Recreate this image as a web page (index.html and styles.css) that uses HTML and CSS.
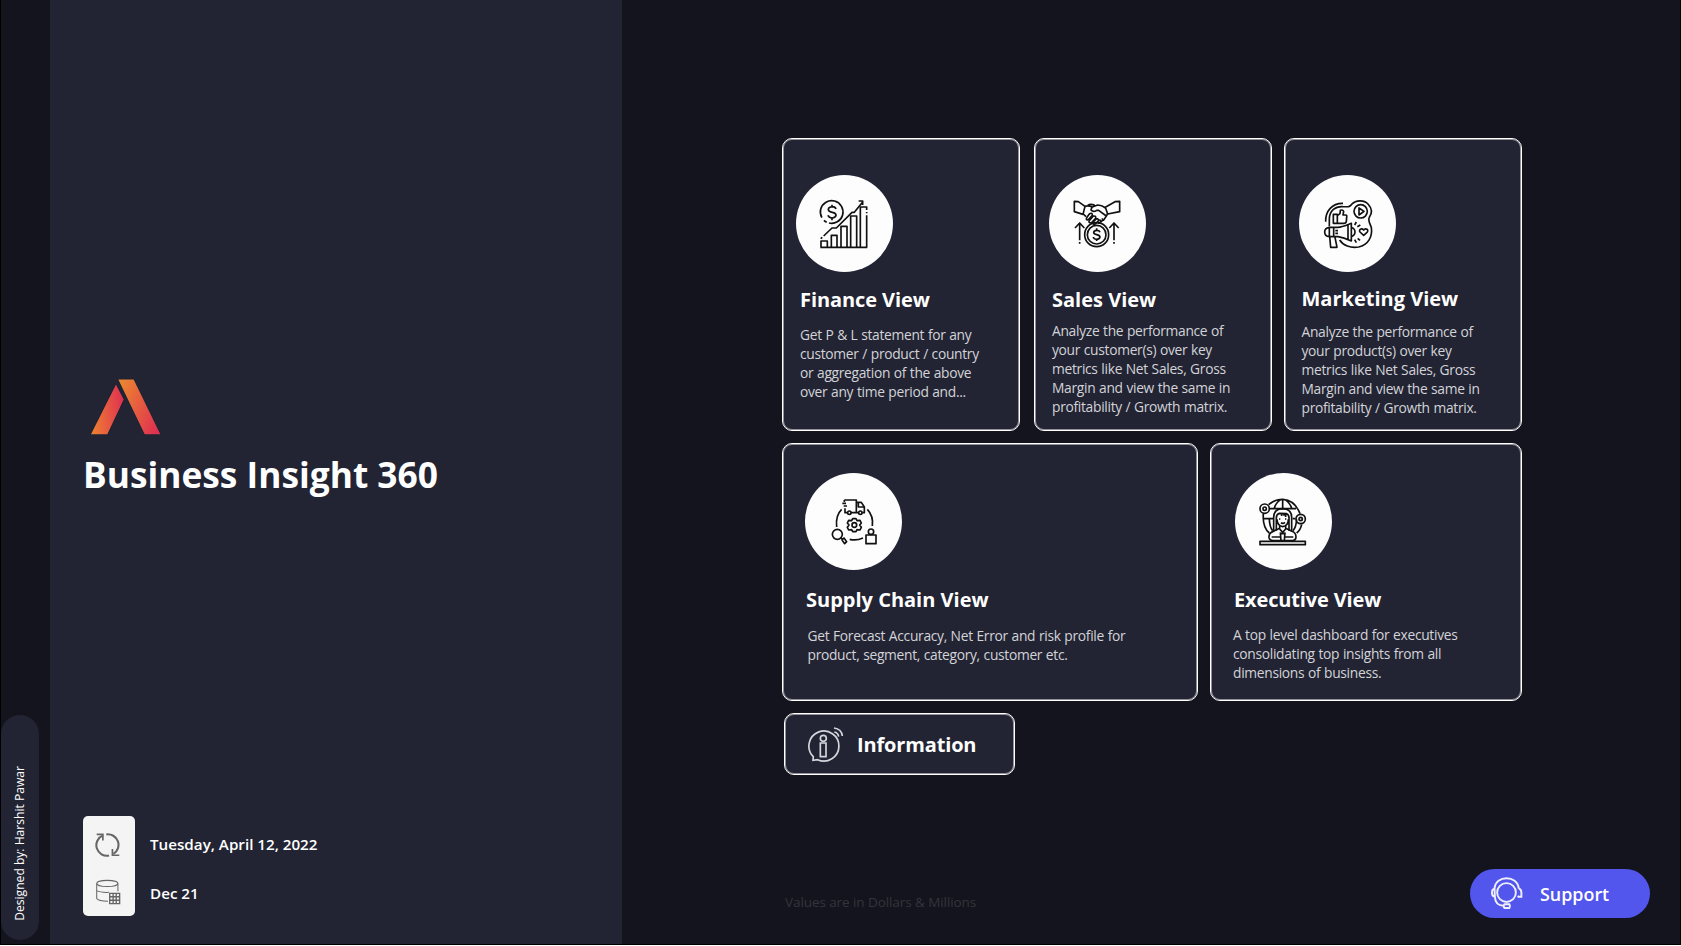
FILE: index.html
```html
<!DOCTYPE html>
<html lang="en">
<head>
<meta charset="utf-8">
<title>Business Insight 360</title>
<link rel="stylesheet" href="styles.css">
</head>
<body>
<div class="app">
  <aside class="rail"><div class="credit"><span>Designed by: Harshit Pawar</span></div></aside>
  <section class="brand">
    <svg class="logo" viewBox="90 54 216 176">
      <defs>
        <linearGradient id="ga" x1="0" x2="1" y1=".6" y2=".4"><stop offset="0" stop-color="#ee7d33"/><stop offset="1" stop-color="#df3150"/></linearGradient>
        <linearGradient id="gb" x1="0" x2="1" y1=".2" y2=".8"><stop offset="0" stop-color="#ec8331"/><stop offset="1" stop-color="#df3150"/></linearGradient>
      </defs>
      <g stroke="#142433" stroke-width="5" paint-order="stroke">
        <path fill="url(#ga)" d="M168 73 191 118 142 222H93Z"/>
        <path fill="url(#gb)" d="M175 58H221L301 222H254Z"/>
      </g>
    </svg>
    <h1>Business Insight 360</h1>
    <div class="status">
      <div class="status-icons">
        <svg viewBox="285 397 76 76" fill="none" stroke="#666" stroke-width="6"><path d="M308 407A31 31 0 0 0 326 466M318 404A31 31 0 0 1 339 461"/><path d="M290 404H308V422M356 465H336V447" stroke-width="5"/></svg>
        <svg viewBox="285 537 76 76" fill="none" stroke="#666" stroke-width="3"><ellipse cx="321" cy="550" rx="31" ry="9"/><path d="M290 550V594Q295 602 323 602M352 550V573M290 571Q300 577 326 576"/><path stroke-width="4" d="M328 579H357V609H328ZM338 579V609M347 579V609M328 589H357M328 599H357"/></svg>
      </div>
      <div class="status-text"><span class="date">Tuesday, April 12, 2022</span><span class="month">Dec 21</span></div>
    </div>
  </section>
  <main>
    <div class="row top">
      <article class="card finance">
        <div class="disc"><svg viewBox="64 135 291 291">
          <path d="M147 318 172 294H185L232 247H239L264 216M252 213H264V225"/>
          <circle cx="171" cy="246" r="34" stroke-dasharray="185 7 10 12" transform="rotate(150 171 246)"/>
          <path d="M184 237Q182 230 173 230Q161 231 161 239Q162 246 173 247Q184 249 184 256Q183 263 172 264Q162 263 160 256M172 224V230M172 264V271"/>
          <path d="M139 352V333H158V352M170 352V316H187V352M199 352V289H217V352M228 352V258H246V352M257 352V231H276V240M276 246V250M276 256V352M137 352H278M138 326 143 322"/>
        </svg></div>
        <h2>Finance View</h2>
        <p><span>Get P &amp; L statement for any</span><span>customer / product / country</span><span>or aggregation of the above</span><span>over any time period and...</span></p>
      </article>
      <article class="card sales">
        <div class="disc"><svg viewBox="72 135 291 291">
          <path d="M148 214 160 215 180 229 174 253 148 245ZM284 214 270 215 241 232 248 252 284 245Z"/>
          <path d="M180 229Q190 226 202 231L218 225Q230 225 242 234M209 226Q197 220 188 226M201 231 198 240Q205 248 215 241L221 241 244 258 248 251M244 258 237 269 219 281M230 266 238 271M223 269 231 276M175 252 183 260M187 260 193 252Q202 246 202 256L189 270Q180 270 187 260M192 273 205 258Q214 257 212 265L200 278Q191 280 192 273M203 278 214 266Q222 266 220 273L211 282Q203 284 203 278"/>
          <circle cx="215" cy="314" r="36"/><circle cx="215" cy="314" r="28"/>
          <path d="M225 307Q223 300 215 301Q206 302 206 308Q207 313 215 314Q225 316 225 322Q223 328 215 328Q206 328 205 321M215 295V301M215 328V333"/>
          <path d="M164 279V331M164 336V341M150 294 164 279 178 294M267 279V331M267 336V341M253 294 267 279 281 294"/>
        </svg></div>
        <h2>Sales View</h2>
        <p><span>Analyze the performance of</span><span>your customer(s) over key</span><span>metrics like Net Sales, Gross</span><span>Margin and view the same in</span><span>profitability / Growth matrix.</span></p>
      </article>
      <article class="card marketing">
        <div class="disc"><svg viewBox="72 135 291 291">
          <path d="M152 275C151 243 172 219 204 220M163 289V266C164 242 181 228 204 230C221 231 224 231 231 222C242 210 267 209 279 222C291 235 292 249 283 262C278 270 284 279 289 292C293 320 280 345 251 351C226 355 204 346 194 330"/>
          <circle cx="257" cy="244" r="20"/><path d="M252 234V255L267 244Z"/>
          <path d="M175 253H187V280H175ZM187 257 195 251 196 241Q203 238 206 244L204 255H213Q217 257 215 262L214 274Q213 280 207 280H187"/>
          <path d="M163 292H189C202 291 215 285 229 280V333C213 326 201 322 189 320H163Q149 319 149 306Q149 294 163 292ZM163 292V320M176 292V320M219 285V329M229 292Q240 296 240 306Q240 316 229 320M181 302H189M181 310H189M164 320 167 352H186L180 322"/>
          <path d="M239 285 244 276M247 290 256 285M239 329 244 338M248 325 255 331"/>
          <path d="M266 316 255 306C250 299 260 293 266 300C272 292 283 300 276 307Z"/>
        </svg></div>
        <h2>Marketing View</h2>
        <p><span>Analyze the performance of</span><span>your product(s) over key</span><span>metrics like Net Sales, Gross</span><span>Margin and view the same in</span><span>profitability / Growth matrix.</span></p>
      </article>
    </div>
    <div class="row bottom">
      <article class="card supply">
        <div class="disc"><svg viewBox="91 113 291 291">
          <path d="M209 194H245V232H229M219 232H211V219M203 204H214M207 212H217M209 194V200M245 201H260L269 215V232H263M250 232H245M251 202V215H268"/>
          <circle cx="224" cy="232" r="5"/><circle cx="257" cy="232" r="5"/>
          <path d="M201 222Q182 240 186 275M278 222Q297 242 293 272M225 312Q245 317 265 308"/>
          <circle cx="239" cy="269" r="7"/>
          <path d="M234 250H244L247 256 256 255 260 263 255 269 260 276 256 284 247 283 244 289H234L231 283 222 284 218 276 223 269 218 263 222 255 231 256Z"/>
          <circle cx="188" cy="297" r="15"/><path d="M198 307 204 312M202 314 208 308 216 319 210 325Z"/>
          <circle cx="289" cy="289" r="8"/><path d="M274 299H304V325H274Z"/>
        </svg></div>
        <h2>Supply Chain View</h2>
        <p><span>Get Forecast Accuracy, Net Error and risk profile for</span><span>product, segment, category, customer etc.</span></p>
      </article>
      <article class="card executive">
        <div class="disc"><svg viewBox="91 113 291 291">
          <path d="M192 208Q210 192 235 192Q270 194 286 235M176 235Q173 275 194 293M291 267Q288 283 276 293M194 220H274M177 250H205M264 250H272M234 192V219M228 193Q212 204 209 219M241 193Q257 204 261 219M194 252Q195 277 204 286M276 252Q274 277 265 286"/>
          <circle cx="180" cy="220" r="14"/><circle cx="180" cy="220" r="5"/><circle cx="288" cy="251" r="14"/><circle cx="288" cy="251" r="5"/>
          <path d="M207 289V246Q208 220 234 220Q261 221 261 246V289M215 286V250Q214 237 224 234L246 235Q254 239 253 250V286M217 252Q218 272 234 274Q251 272 251 252M231 235V242M238 235V241M243 236V245M223 251H227M241 251H245M229 262Q234 267 241 261"/>
          <path d="M225 272V281L234 291 243 281V272M225 279 206 288Q192 292 193 307Q195 316 205 316H264Q274 315 274 305Q274 292 262 288L243 279M201 305H228M240 305H266M227 291 229 316M241 291 239 316M227 295H241"/>
          <path d="M166 318H302V328H166Z"/>
        </svg></div>
        <h2>Executive View</h2>
        <p><span>A top level dashboard for executives</span><span>consolidating top insights from all</span><span>dimensions of business.</span></p>
      </article>
    </div>
    <div class="card info">
      <svg viewBox="97 872 111 111" fill="none" stroke="#d5d5dc" stroke-width="5"><path d="M116 964A45 45 0 1 1 129 973L115 975Z"/><circle cx="146" cy="909" r="9"/><path d="M137 923H154V964H137ZM179 890Q190 892 192 904M178 878Q201 881 203 902"/></svg>
      <span>Information</span>
    </div>
    <footer>
      <span class="note">Values are in Dollars &amp; Millions</span>
      <div class="support">
        <svg viewBox="120 80 100 102" fill="none" stroke="#eeeeff" stroke-width="6"><circle cx="170" cy="128" r="29"/><path d="M133 116C136 73 204 73 208 116M133 116Q125 117 125 128Q125 140 134 141ZM208 116Q216 118 216 128V141H207L205 138M134 141Q135 167 160 169M164 164H179Q183 170 179 176H164Q158 170 164 164Z"/></svg>
        <span>Support</span>
      </div>
    </footer>
  </main>
</div>
</body>
</html>
```
FILE: styles.css
```css
*{box-sizing:border-box}
body{margin:0;background:#fff;font-family:"Open Sans","Noto Sans",sans-serif;color:#fff}
h1,h2,p{margin:0}
.app{display:flex;width:1681px;height:945px;background:#14141e;border:solid #000;border-width:0 1px 1px}
.rail{width:49px;padding:715px 0 0 0;flex:none}
.credit{width:38px;height:225px;border-radius:19px;background:#222433;display:flex;align-items:flex-end;justify-content:center;padding-bottom:19px}
.credit span{writing-mode:vertical-rl;transform:rotate(180deg);font-size:12.1px;line-height:20px;white-space:nowrap}
.brand{width:572px;flex:none;background:#222433;padding:378px 0 0 33px;display:flex;flex-direction:column}
.logo{width:72px;height:59px;margin-left:7px}
h1{font-size:35.3px;line-height:48px;font-weight:700;margin-top:13px;white-space:nowrap}
.status{display:flex;margin-top:318px}
.status-icons{width:52px;height:100px;border-radius:5px;background:#f4f4f4;padding:16px 14px 11px 12px;display:flex;flex-direction:column;justify-content:space-between;align-items:center;gap:20px}
.status-icons svg{width:26px;height:26px}
.status-text{display:flex;flex-direction:column;gap:25px;padding:16px 0 0 15px;font-size:15.2px;font-weight:600;line-height:24px;white-space:nowrap}
main{padding:138px 0 0 160px;flex:1}
.row{display:flex}
.card{border:1px solid #fff;box-shadow:inset 0 0 0 1px rgba(255,255,255,.5);border-radius:10px;background:#222433}
.top .card{width:238px;height:293px;padding:36px 0 0 14px}
.top .sales{margin-left:14px}
.top .marketing{margin-left:12px}
.bottom{margin-top:12px}
.bottom .card{height:258px;padding:29px 0 0 22px}
.supply{width:416px}
.bottom .executive{width:312px;margin-left:12px;padding-left:24px}
.disc{width:97px;height:97px;border-radius:50%;background:#fdfdfd}
.disc svg{display:block;width:97px;height:97px;fill:none;stroke:#111;stroke-width:5;stroke-linejoin:round}
h2{font-size:20px;line-height:28px;font-weight:700;margin:14px 0 0 3px;white-space:nowrap}
p{font-size:13.8px;letter-spacing:-.3px;word-spacing:.4px;line-height:19px;color:#d3d3d8;margin:11px 0 0 3px}
p span{display:block;white-space:nowrap}
.top .finance{padding-left:13px}
.finance h2{letter-spacing:-.08px;margin-left:4px}
.finance p{margin-left:4px}
.sales p{margin-top:7px}
.marketing h2{margin:13px 0 0 2.5px}
.marketing p{margin:9px 0 0 2.5px}
.bottom h2{margin:16px 0 0 1px}
.supply p{margin:12px 0 0 2.5px}
.bottom .executive h2{margin-left:-1px;letter-spacing:-.15px}
.executive p{margin:11px 0 0 -2px}
.info{width:231px;height:62px;margin:12px 0 0 2px;display:flex;align-items:center;padding-left:22px}
.info svg{width:37px;height:37px}
.info span{font-size:20px;letter-spacing:-.15px;font-weight:700;line-height:28px;margin-left:13px;padding-top:2px}
footer{display:flex;align-items:flex-start;justify-content:space-between;padding:94px 30px 0 3px}
.note{font-size:13.5px;letter-spacing:-.08px;line-height:20px;color:#33343a;margin-top:23px}
.support{width:180px;height:49px;border-radius:25px;background:#5256ec;display:flex;align-items:center;padding-left:20px}
.support svg{width:33px;height:33px}
.support span{font-size:17.9px;font-weight:600;margin-left:17px}
```
